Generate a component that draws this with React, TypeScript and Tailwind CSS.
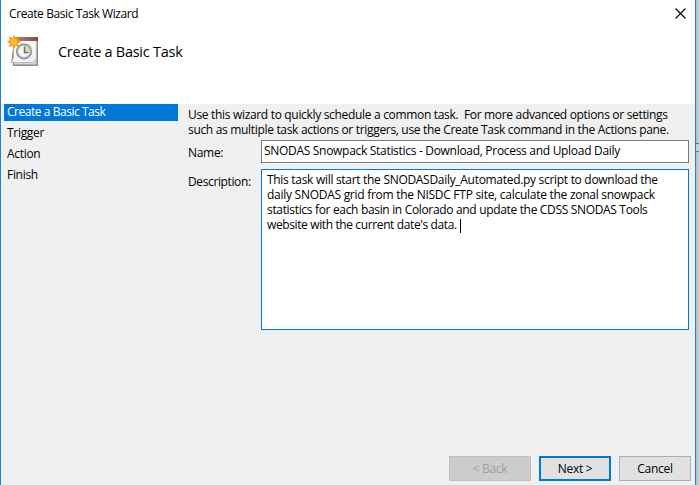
const steps = ["Trigger", "Action", "Finish"];

function TaskIcon() {
  return (
    <svg width="34" height="34" viewBox="0 0 34 34" className="block">
      <defs>
        <linearGradient id="paper" x1="0" y1="0" x2="1" y2="1">
          <stop offset="0" stopColor="#ffffff" />
          <stop offset="1" stopColor="#ececec" />
        </linearGradient>
        <linearGradient id="binding" x1="0" y1="0" x2="1" y2="0">
          <stop offset="0" stopColor="#bd8776" />
          <stop offset="1" stopColor="#7c4e42" />
        </linearGradient>
      </defs>
      <path d="M7 6H31V31H6V28H4Z" fill="#8c8c8c" />
      <path d="M7 6H29.5V29.5H7Z" fill="#d4d4d4" />
      <path d="M7 4H29.5V24L26 27.5H4.5L6.5 22Z" fill="url(#paper)" stroke="#a6a6a6" strokeWidth=".7" />
      <path d="M6 2H31V6H6Z" fill="url(#binding)" />
      <circle cx="17" cy="16.4" r="8" fill="#7d8489" />
      <circle cx="17" cy="16.4" r="7" fill="#b3bcc3" />
      <circle cx="17" cy="16.4" r="5.6" fill="#f3f4f2" />
      <path d="M17 16.4V10.8A5.6 5.6 0 0 1 22.6 16.4Z" fill="#f2d28c" />
      <path d="M17.5 11.5V17.5H21.5" fill="none" stroke="#4d7291" strokeWidth="1.4" />
      <path d="M6.8 0L8.4 3.2L12 1.5L10.8 5L14 6.8L10.8 8.6L12 12L8.5 10.8L6.8 14L5.2 10.8L1.6 12L3 8.6L0 6.8L3 5L1.6 1.6L5.2 3Z" fill="#f39a12" />
      <circle cx="6.8" cy="6.8" r="3.6" fill="#ffb92e" />
    </svg>
  );
}

export default function App() {
  return (
    <div className="flex h-[485px] w-[699px] overflow-hidden bg-[#c8c8c8] font-['Open_Sans','Noto_Sans',sans-serif] text-[12px] leading-[15px] whitespace-pre text-black">
      <div className="flex w-[696px] flex-col border-x border-[#1883d7] bg-[#f0f0f0]">
        <header className="h-[104px] bg-white">
          <div className="flex h-7 items-start justify-between pt-1.5 pr-[9px] pl-2">
            <span className="tracking-[-0.41px]">Create Basic Task Wizard</span>
            <svg width="11" height="11" viewBox="0 0 11 11" className="mt-0.5">
              <path d="M.5 .5L10.5 10.5M10.5 .5L.5 10.5" stroke="#000" strokeWidth="1.1" />
            </svg>
          </div>
          <div className="flex items-start pt-[7px] pl-1.5">
            <TaskIcon />
            <h1 className="mt-[7px] ml-[17px] text-[14.5px] leading-5 tracking-[-0.26px]">Create a Basic Task</h1>
          </div>
        </header>

        <main className="flex h-[352px]">
          <nav className="ml-[3px] w-[174px]">
            <div className="h-[17px] bg-[#0078d7] pl-[3px] tracking-[-0.46px] text-white">Create a Basic Task</div>
            <div className="mt-1 flex flex-col gap-1.5 pl-[3px] tracking-[-0.3px]">
              {steps.map((s) => <span key={s}>{s}</span>)}
            </div>
          </nav>
          <section className="ml-2.5 w-[501px] pt-[3px]">
            <div className="tracking-[-0.32px]">Use this wizard to quickly schedule a common task.  For more advanced options or settings</div>
            <div className="tracking-[-0.32px]">such as multiple task actions or triggers, use the Create Task command in the Actions pane.</div>
            <div className="mt-[3px] flex">
              <span className="w-[73px] pt-[5px] tracking-[-0.3px]">Name:</span>
              <div className="h-[23px] w-[428px] border border-[#7a7a7a] bg-white pt-0.5 pl-0.5">
                <span className="tracking-[-0.3px]">SNODAS Snowpack Statistics - Download, Process and Upload Daily</span>
              </div>
            </div>
            <div className="mt-1.5 flex">
              <span className="w-[73px] pt-[5px] tracking-[-0.38px]">Description:</span>
              <div className="h-[161px] w-[428px] border border-[#0078d7] bg-white pt-0.5 pl-[5px]">
                <div className="tracking-[-0.3px]">This task will start the SNODASDaily_Automated.py script to download the</div>
                <div className="tracking-[-0.27px]">daily SNODAS grid from the NISDC FTP site, calculate the zonal snowpack</div>
                <div className="tracking-[-0.33px]">statistics for each basin in Colorado and update the CDSS SNODAS Tools</div>
                <div className="flex">
                  <span className="w-[193px] tracking-[-0.38px]">website with the current date's data.</span>
                  <i className="mt-0.5 h-[14px] w-px bg-black" />
                </div>
              </div>
            </div>
          </section>
        </main>

        <footer className="flex justify-end gap-2 pr-1">
          <button className="h-[25px] w-[82px] border border-[#bfbfbf] bg-[#cccccc] tracking-[-0.3px] text-[#a0a0a0]">&lt; Back</button>
          <button className="h-[25px] w-[72px] border-2 border-[#0078d7] bg-[#e1e1e1] tracking-[-0.3px]">Next &gt;</button>
          <button className="h-[25px] w-[72px] border border-[#adadad] bg-[#e1e1e1] tracking-[-0.3px]">Cancel</button>
        </footer>
      </div>
      <div className="w-[3px] bg-gradient-to-r from-[#b8b8b8] to-[#d0d0d0] pt-[143px]">
        <div className="h-[9px] border-y border-[#777] bg-[#ccc]" />
      </div>
    </div>
  );
}
